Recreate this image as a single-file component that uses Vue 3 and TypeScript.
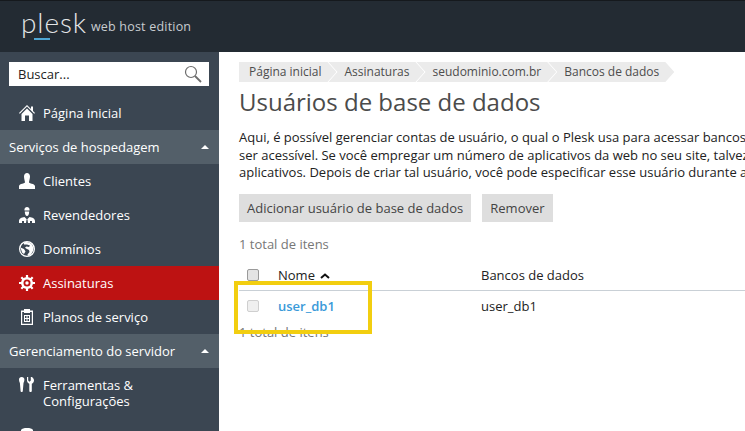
<script setup lang="ts">
interface NavItem { label: string; icon: string; active?: boolean }
const crumbs: string[] = ['Página inicial', 'Assinaturas', 'seudominio.com.br', 'Bancos de dados']
const hosting: NavItem[] = [
  { label: 'Clientes', icon: 'user' },
  { label: 'Revendedores', icon: 'reseller' },
  { label: 'Domínios', icon: 'globe' },
  { label: 'Assinaturas', icon: 'gear', active: true },
  { label: 'Planos de serviço', icon: 'plan' },
]
</script>

<template>
  <div class="page">
    <header class="top">
      <div class="logo">
        <span class="plesk"><span class="p">p</span><span class="l">l</span>esk</span>
        <span class="edition">web host edition</span>
      </div>
    </header>
    <div class="body">
      <aside class="side">
        <div class="search-wrap">
          <div class="search">
            <span>Buscar...</span>
            <svg width="18" height="18" viewBox="0 0 18 18" fill="none" stroke="#6d6d6d">
              <circle cx="7" cy="7" r="5.5" stroke-width="1.2" />
              <path d="M11 11l6 6" stroke-width="1.8" />
            </svg>
          </div>
        </div>
        <a class="item">
          <svg class="ic" width="16" height="16" viewBox="0 0 16 16" fill="#fff">
            <path d="M8 0L12 4V1.500h2v4.500l2 2-.8.8L8 1.600.8 8.800 0 8z" />
            <path d="M8 3.400l5.500 5.500V16H10v-5.500H6V16H2.500V8.900z" />
          </svg>
          <span>Página inicial</span>
        </a>
        <div class="group"><span>Serviços de hospedagem</span><i class="caret"></i></div>
        <a v-for="it in hosting" :key="it.label" class="item" :class="{ active: it.active }">
          <svg class="ic" width="16" height="16" viewBox="0 0 16 16" fill="#fff">
            <path v-if="it.icon === 'user'" d="M5 3.500C5 1.500 6.300 0 8 0s3 1.500 3 3.500S10 8 10 9.500c0 1 5.500 1 6 3.500v3H0v-3c.5-2.500 6-2.500 6-3.500S5 5.500 5 3.500z" />
            <template v-else-if="it.icon === 'reseller'">
              <path d="M5.500 2.500C5.500 1 6.500 0 8 0s2.500 1 2.500 2.500v1h-5z" />
              <path d="M5.800 4.500h4.400C10.200 7 9.300 9 8 9S5.800 7 5.800 4.500z" />
              <path d="M5.500 10L8 12.500 10.500 10c3 .5 5.500 1.500 5.500 4v2H0v-2c0-2.500 2.500-3.500 5.500-4z" />
              <path d="M7.500 12.500h1l.5 3.500H7zM3 14h2v2H3zM11 14h2v2h-2z" fill="#3b4652" />
            </template>
            <template v-else-if="it.icon === 'globe'">
              <path fill-rule="evenodd" d="M8 0a8 8 0 1 1 0 16A8 8 0 0 1 8 0zm0 1.300a6.700 6.700 0 1 0 0 13.400A6.700 6.700 0 0 0 8 1.300z" />
              <path d="M5 1.500c3-1 6 0 8 2l1.500 3.500-.5 3-2 3.500-3 1.500-.5-1.500 2-2.500-.5-2L7 7.500 6 6.500l1.500-1L10 6l1-1.500L8 3.500 5 3.500zM1.500 6.500L5 8l1.500 2.500L5 13 3 11.500z" />
            </template>
            <template v-else-if="it.icon === 'gear'">
              <path d="M8 8L8 0M8 8L8 16M8 8L0 8M8 8L16 8M8 8L2.300 2.300M8 8L13.700 2.300M8 8L2.300 13.700M8 8L13.700 13.700" stroke="#fff" stroke-width="2.200" />
              <circle cx="8" cy="8" r="6" />
              <circle cx="8" cy="8" r="3.500" fill="#bd1212" />
              <circle cx="8" cy="8" r="1.700" />
            </template>
            <template v-else>
              <path fill-rule="evenodd" d="M5 0h6v1.500h3V16H2V1.500h3zM3.200 3v11.800h9.600V3H11v1H5V3z" />
              <path fill-rule="evenodd" d="M5 6h6v7H5zm1 1v2h1.500V7zm2.500 0v2H10V7zM6 10v2h1.500v-2zm2.500 0v2H10v-2z" />
            </template>
          </svg>
          <span>{{ it.label }}</span>
        </a>
        <div class="group"><span>Gerenciamento do servidor</span><i class="caret"></i></div>
        <a class="item two">
          <svg class="ic" width="16" height="16" viewBox="0 0 16 16" fill="#fff">
            <path d="M0 2.500C0 1 1 0 2.700 0S5.400 1 5.400 2.500c0 1.500-.5 2.500-.9 3.500l-.7 8c0 .6-.5 1-1.100 1s-1.100-.4-1.100-1L.9 6C.5 5 0 4 0 2.500z" />
            <path d="M8 0l1.200 0v3.500l1.300 1.200 1.300-1.200V0H13c1 .8 2 2 2 3.500s-1 2.500-2.200 3.300V14c0 .6-.7 1-1.300 1s-1.200-.4-1.200-1V6.800C9 6 8 5 8 3.500z" />
          </svg>
          <span>Ferramentas &amp;<br />Configurações</span>
        </a>
        <a class="item">
          <svg class="ic" width="16" height="16" viewBox="0 0 16 16" fill="#fff">
            <path d="M2 3c1-1.500 3-2 6-2s5 .5 6 2v13H2z" />
          </svg>
          <span>Extensões</span>
        </a>
      </aside>

      <main class="main">
        <nav class="crumbs">
          <a v-for="c in crumbs" :key="c" class="crumb">{{ c }}</a>
        </nav>
        <h1>Usuários de base de dados</h1>
        <div class="intro-wrap">
          <p class="intro">Aqui, é possível gerenciar contas de usuário, o qual o Plesk usa para acessar bancos</p>
          <p class="intro">ser acessível. Se você empregar um número de aplicativos da web no seu site, talvez</p>
          <p class="intro">aplicativos. Depois de criar tal usuário, você pode especificar esse usuário durante a</p>
        </div>
        <div class="buttons">
          <button>Adicionar usuário de base de dados</button>
          <button>Remover</button>
        </div>
        <div class="total">1 total de itens</div>
        <div class="table">
          <div class="row head">
            <div class="c-check"><span class="box"></span></div>
            <div class="c-name">Nome <svg class="sort" width="10" height="6" viewBox="0 0 10 6" fill="none" stroke="#111" stroke-width="2"><path d="M1 5l4-3.500L9 5" /></svg></div>
            <div class="c-db">Bancos de dados</div>
          </div>
          <div class="row">
            <div class="c-check"><span class="box light"></span></div>
            <div class="c-name"><a class="link">user_db1</a></div>
            <div class="c-db">user_db1</div>
          </div>
        </div>
        <div class="total bottom">1 total de itens</div>
        <div class="mark"></div>
      </main>
    </div>
  </div>
</template>

<style>
html, body { margin: 0; overflow: hidden; background: #fff; }
</style>

<style scoped>
.page { width: 745px; height: 431px; overflow: hidden; display: flex; flex-direction: column; font-family: "Open Sans", sans-serif; font-size: 13px; }
.top { height: 51px; flex: none; background: #232b33; border-top: 1px solid #15191d; display: flex; padding-left: 21px; }
.logo { display: flex; align-items: flex-start; gap: 4px; }
.plesk { font-family: Lato, sans-serif; font-weight: 300; font-size: 28px; line-height: 40px; color: #e4e6e8; letter-spacing: .9px; padding-top: 1px; }
.l { position: relative; }
.l::after { content: ""; position: absolute; left: -3px; right: -6px; bottom: -1px; height: 2px; background: #4fa6d3; }
.edition { font-size: 12.500px; line-height: 18px; color: #c8ccd0; letter-spacing: .2px; padding-top: 17px; }
.body { flex: 1; display: flex; min-height: 0; }
.side { width: 219px; flex: none; background: #3b4652; color: #fff; }
.search-wrap { padding: 10px 10px 10px 9px; }
.search { height: 24px; background: #fff; color: #222; display: flex; align-items: center; justify-content: space-between; padding: 0 7px 0 9px; }
.item { display: flex; align-items: center; gap: 8px; height: 34px; padding-left: 19px; line-height: 16px; box-sizing: border-box; }
.item .ic { flex: none; }
.item.two { height: 50px; align-items: flex-start; padding-top: 9px; }
.item.active { background: #bd1212; }
.group { height: 34px; background: #535f69; display: flex; align-items: center; justify-content: space-between; padding: 0 10px 0 9px; }
.caret { width: 0; height: 0; border: 4px solid transparent; border-top: 0; border-bottom: 4px solid #fff; }
.main { flex: 1; min-width: 0; padding: 10px 0 0 20px; position: relative; overflow: hidden; }
.crumbs { display: flex; height: 20px; font-size: 12px; color: #4d4d4d; }
.crumb { background: #ebebeb; line-height: 20px; padding: 0 15px 0 16px; margin-right: -8px; clip-path: polygon(0 0, calc(100% - 9px) 0, 100% 50%, calc(100% - 9px) 100%, 0 100%, 9px 50%); }
.crumb:first-child { padding-left: 10px; clip-path: polygon(0 0, calc(100% - 9px) 0, 100% 50%, calc(100% - 9px) 100%, 0 100%); }
h1 { margin: 3px 0 0; font-size: 24px; font-weight: 400; line-height: 34px; color: #4b4b4b; white-space: nowrap; }
.intro-wrap { margin-top: 10px; }
.intro { margin: 0; line-height: 17.500px; color: #222; white-space: nowrap; }
.buttons { display: flex; gap: 11px; margin-top: 12px; }
button { height: 28px; border: 0; padding: 0 8px; background: #dedede; color: #444; font: inherit; }
.total { color: #777; margin-top: 13px; line-height: 18px; }
.table { margin-top: 8px; color: #222; }
.row { display: flex; align-items: center; height: 30px; }
.row.head { height: 29px; border-bottom: 1px solid #c9d0d6; }
.c-check { width: 39px; padding-left: 8px; box-sizing: border-box; display: flex; align-items: center; }
.c-name { width: 203px; }
.sort { margin-left: 2px; vertical-align: 1px; }
.box { width: 10px; height: 10px; border: 1px solid #9a9a9a; border-radius: 2px; background: #e4e4e4; display: block; }
.box.light { border-color: #cfcfcf; background: #efefef; }
.link { color: #3a9ad9; font-weight: 600; }
.total.bottom { margin-top: 2px; }
.mark { position: absolute; left: 15px; top: 229px; width: 130px; height: 45px; border: 4px solid #f2ce10; pointer-events: none; }
</style>
